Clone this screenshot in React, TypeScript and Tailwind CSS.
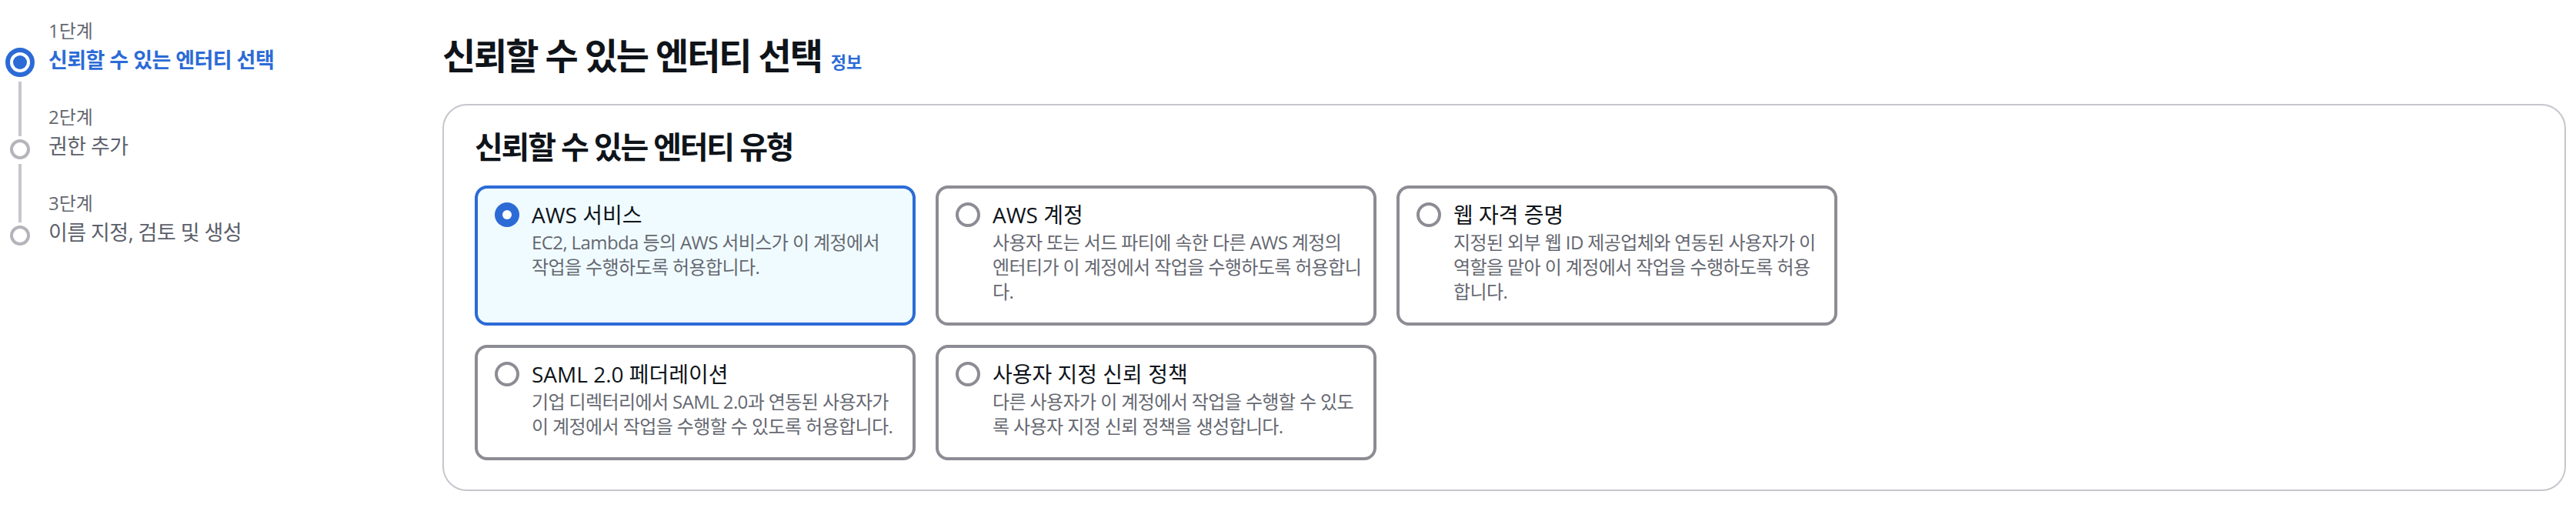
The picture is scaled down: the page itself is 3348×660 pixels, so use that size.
import React from 'react';

type Tile = { title: string; lines: string[]; selected?: boolean };

const tiles: Tile[] = [
  {
    title: 'AWS 서비스',
    lines: ['EC2, Lambda 등의 AWS 서비스가 이 계정에서', '작업을 수행하도록 허용합니다.'],
    selected: true,
  },
  {
    title: 'AWS 계정',
    lines: ['사용자 또는 서드 파티에 속한 다른 AWS 계정의', '엔터티가 이 계정에서 작업을 수행하도록 허용합니', '다.'],
  },
  {
    title: '웹 자격 증명',
    lines: ['지정된 외부 웹 ID 제공업체와 연동된 사용자가 이', '역할을 맡아 이 계정에서 작업을 수행하도록 허용', '합니다.'],
  },
  {
    title: 'SAML 2.0 페더레이션',
    lines: ['기업 디렉터리에서 SAML 2.0과 연동된 사용자가', '이 계정에서 작업을 수행할 수 있도록 허용합니다.'],
  },
  {
    title: '사용자 지정 신뢰 정책',
    lines: ['다른 사용자가 이 계정에서 작업을 수행할 수 있도', '록 사용자 지정 신뢰 정책을 생성합니다.'],
  },
];

const steps = [
  { label: '1단계', title: '신뢰할 수 있는 엔터티 선택', active: true },
  { label: '2단계', title: '권한 추가', active: false },
  { label: '3단계', title: '이름 지정, 검토 및 생성', active: false },
];

function StepNav() {
  return (
    <nav className="w-[575px] shrink-0 pt-[24px]">
      {steps.map((s, i) => {
        const last = i === steps.length - 1;
        return (
          <div key={s.label} className="flex flex-col">
            {/* label row */}
            <div className="flex">
              <div className="w-[52px] shrink-0 flex justify-center">
                {i > 0 && <div className="w-[4px] bg-[#c6c6cd]" />}
              </div>
              <div className="ml-[11px] pb-[2px] text-[24px] leading-[32px] text-[#656871]">{s.label}</div>
            </div>
            {/* title row */}
            <div className="flex">
              <div className="w-[52px] shrink-0 flex flex-col items-center">
                {s.active ? (
                  <div className="mt-[4px] w-[38px] h-[38px] rounded-full border-[6px] border-[#2c6bd6] flex items-center justify-center">
                    <div className="w-[18px] h-[18px] rounded-full bg-[#2c6bd6]" />
                  </div>
                ) : (
                  <>
                    <div className="w-[4px] h-[7px] mb-[4px] bg-[#c6c6cd]" />
                    <div className="w-[26px] h-[26px] rounded-full border-[4px] border-[#b4b4bb] bg-white" />
                  </>
                )}
                {!last && <div className="w-[4px] flex-1 mt-[6px] bg-[#c6c6cd]" />}
              </div>
              <div
                className={`ml-[11px] text-[27px] leading-[40px] tracking-[-0.02em] ${last ? '' : 'pb-[38px]'} ${
                  s.active ? 'font-bold text-[#2c6bd6]' : 'text-[#5b5f6a]'
                }`}
              >
                {s.title}
              </div>
            </div>
          </div>
        );
      })}
    </nav>
  );
}

function Radio({ checked }: { checked?: boolean }) {
  if (checked) {
    return (
      <div className="w-[32px] h-[32px] rounded-full bg-[#2c6bd6] flex items-center justify-center">
        <div className="w-[12px] h-[12px] rounded-full bg-white" />
      </div>
    );
  }
  return <div className="w-[32px] h-[32px] rounded-full border-[4px] border-[#8c8c94] bg-white" />;
}

function TileCard({ tile }: { tile: Tile }) {
  return (
    <div
      className={`flex rounded-[16px] border-[4px] pt-[14px] pb-[24px] pl-[22px] pr-[20px] ${
        tile.selected ? 'border-[#2c6bd6] bg-[#f0fbff]' : 'border-[#8c8c94] bg-white'
      }`}
    >
      <div className="h-[40px] shrink-0 flex items-center">
        <Radio checked={tile.selected} />
      </div>
      <div className="ml-[16px] min-w-0">
        <div className="text-[28px] leading-[40px] text-[#0f141a] whitespace-nowrap">{tile.title}</div>
        <div className="text-[24px] leading-[32px] tracking-[-0.025em] text-[#656871]">
          {tile.lines.map((l) => (
            <div key={l} className="whitespace-nowrap">
              {l}
            </div>
          ))}
        </div>
      </div>
    </div>
  );
}

export default function App() {
  return (
    <div className="flex w-[3348px] h-[660px] bg-white overflow-hidden font-['Open_Sans','Noto_Sans_CJK_KR',sans-serif]">
      <StepNav />

      <main className="flex-1 min-w-0 pt-[44px] pr-[13px]">
        <div className="flex items-end h-[56px]">
          <h1 className="text-[47px] leading-[56px] font-bold tracking-[-0.045em] text-[#0f141a] whitespace-nowrap">
            신뢰할 수 있는 엔터티 선택
          </h1>
          <a className="ml-[12px] mb-[10px] text-[22px] leading-[20px] font-bold text-[#2c6bd6]">정보</a>
        </div>

        <section className="mt-[35px] rounded-[32px] border-2 border-[#c6c6cd] bg-white px-[40px] pt-[30px] pb-[38px]">
          <h2 className="text-[40px] leading-[48px] font-bold tracking-[-0.055em] text-[#0f141a]">
            신뢰할 수 있는 엔터티 유형
          </h2>
          <div className="mt-[26px] grid grid-cols-[repeat(3,573px)] gap-x-[26px] gap-y-[25px]">
            {tiles.map((t) => (
              <TileCard key={t.title} tile={t} />
            ))}
          </div>
        </section>
      </main>
    </div>
  );
}
